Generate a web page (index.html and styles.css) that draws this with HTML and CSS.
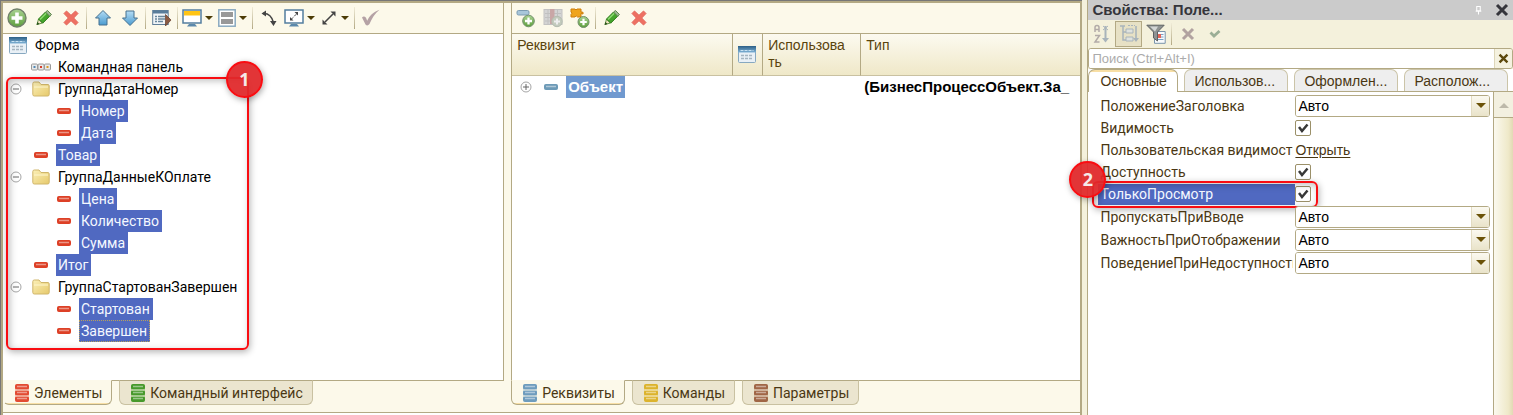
FILE: index.html
```html
<!DOCTYPE html>
<html lang="ru">
<head>
<meta charset="utf-8">
<title>Редактор формы</title>
<link rel="stylesheet" href="styles.css">
</head>
<body>
<svg class="defs" aria-hidden="true">
  <defs>
    <linearGradient id="g-green" x1="0" y1="0" x2="0" y2="1"><stop offset="0" stop-color="#a9d292"/><stop offset="1" stop-color="#5d9e3c"/></linearGradient>
    <linearGradient id="g-blue" x1="0" y1="0" x2="0" y2="1"><stop offset="0" stop-color="#b5ddf5"/><stop offset="1" stop-color="#4a9bd0"/></linearGradient>
    <linearGradient id="g-folder" x1="0" y1="0" x2="1" y2="1"><stop offset="0" stop-color="#fbf0b8"/><stop offset="1" stop-color="#e6c96b"/></linearGradient>
    <linearGradient id="g-head" x1="0" y1="0" x2="0" y2="1"><stop offset="0" stop-color="#2c5f86"/><stop offset="1" stop-color="#7fb2d6"/></linearGradient>
    <symbol id="i-add" viewBox="0 0 20 20"><circle cx="10" cy="10" r="9" fill="url(#g-green)" stroke="#71806b" stroke-width="1.4"/><path d="M10 4.500v11M4.500 10h11" stroke="#fff" stroke-width="3.600"/></symbol>
    <symbol id="i-pencil" viewBox="0 0 18 18"><path d="M2 15.500l1.500-5.500 4 4z" fill="#f3e4c3" stroke="#3d7a25" stroke-width=".8"/><path d="M1.500 16l1-3 2 2z" fill="#275016"/><path d="M3.500 10l7-7 4.200 4.200-7 7z" fill="#45a52c" stroke="#2d7a1b"/><path d="M5 10.500l6.200-6.200" stroke="#8ddb70" stroke-width="1.500"/><path d="M10.500 3l2-1.500 4 4-1.800 1.700z" fill="#9fb796" stroke="#5d8a4b"/></symbol>
    <symbol id="i-del" viewBox="0 0 18 18"><path d="M2 4.500L4.500 2 9 6.300 13.500 2 16 4.500 11.700 9l4.300 4.500-2.500 2.500L9 11.700 4.500 16 2 13.500 6.300 9z" fill="#ee7062" stroke="#e3685c"/></symbol>
    <symbol id="i-up" viewBox="0 0 18 18"><path d="M9 1.500l7.500 7.500h-3.500v7H5V9H1.500z" fill="url(#g-blue)" stroke="#47708f"/></symbol>
    <symbol id="i-down" viewBox="0 0 18 18"><path d="M9 16.500L1.500 9H5V2h8v7h3.500z" fill="url(#g-blue)" stroke="#47708f"/></symbol>
    <symbol id="i-form" viewBox="0 0 18 17"><rect x=".5" y=".5" width="17" height="16" rx="1" fill="#e9f0f6" stroke="#87a8c0"/><path d="M0 0h18v6.500H0z" fill="url(#g-head)"/><path d="M2.500 4.500h13" stroke="#c8e2f3" stroke-dasharray="3 1"/><path d="M3 9.500h3m1 0h3m1 0h3M3 12.500h3m1 0h3m1 0h3" stroke="#a5b4c0" stroke-width="1.500"/></symbol>
    <symbol id="i-formrun" viewBox="0 0 20 18"><rect x=".7" y="1.500" width="15.500" height="14" fill="#f0f4f7" stroke="#607e98"/><path d="M1 1.500h15v3H1z" fill="#587c9a"/><path d="M3 7.500h2m1 0h7M3 10h2m1 0h7M3 12.500h2m1 0h5" stroke="#69879d" stroke-width="1.300"/><path d="M13.500 5.500l5.500 5.500-5.500 6z" fill="#8b5a42" stroke="#643c2b" stroke-width=".7"/></symbol>
    <symbol id="i-monitor" viewBox="0 0 20 18"><rect x="1" y="1" width="18" height="13" fill="#fff" stroke="#537e9f" stroke-width="1.500"/><path d="M2 2h16v4.500H2z" fill="#ffc414"/><path d="M7 15h6l2 2.500H5z" fill="#5c89ab"/></symbol>
    <symbol id="i-split" viewBox="0 0 18 18"><rect x=".8" y=".8" width="16.400" height="16.400" fill="#fff" stroke="#89a9bf" stroke-width="1.500"/><path d="M3 3h12v5H3zM3 10h12v5H3z" fill="#989898"/></symbol>
    <symbol id="i-curve" viewBox="0 0 18 18"><path d="M3 4.500c6-.5 9 3.500 10.500 9" fill="none" stroke="#444" stroke-width="1.500"/><path d="M1.500 4.500L6 1.500v6zM13.500 17l-3.500-5h6.500z" fill="#444"/></symbol>
    <symbol id="i-mresize" viewBox="0 0 20 18"><rect x="1" y="1" width="18" height="13" fill="#fff" stroke="#537e9f" stroke-width="1.500"/><path d="M7 10.500l6-6" stroke="#444" stroke-dasharray="3 1.500"/><path d="M10.500 3H14v3.500zM6 8v3.500h3.500z" fill="#444"/><path d="M7 15h6l2 2.500H5z" fill="#5c89ab"/></symbol>
    <symbol id="i-diag" viewBox="0 0 18 18"><path d="M5 13l8-8" stroke="#444" stroke-width="1.600"/><path d="M10.500 2.500h5v5zM2.500 10.500v5h5z" fill="#444"/></symbol>
    <symbol id="i-check" viewBox="0 0 20 18"><path d="M1 8.500q2-2 4 .2l1.200 3C8.500 7 12 3 18.500.8 14 4.500 10.500 10 8.500 15q-2 2.500-4 .5z" fill="#b5a2a5"/></symbol>
    <symbol id="i-cmdbar" viewBox="0 0 20 8"><g fill="#e9e9e9" stroke="#9a9a9a"><rect x=".5" y="1" width="6" height="6" rx="1"/><rect x="7" y="1" width="6" height="6" rx="1"/><rect x="13.500" y="1" width="6" height="6" rx="1"/></g><path d="M2.500 3h2v2h-2z" fill="#4f88b5"/><path d="M9 3h2v2H9z" fill="#d63e2d"/><path d="M15.500 3h2v2h-2z" fill="#d69a28"/></symbol>
    <symbol id="i-folder" viewBox="0 0 18 16"><path d="M.8 2.500q0-1.500 1.500-1.500H7l2 2.500h7q1.200 0 1.200 1.500v8.500q0 1.500-1.500 1.500H2.300Q.8 15 .8 13.500z" fill="url(#g-folder)" stroke="#d0b66b"/><path d="M2 6h14" stroke="#fff7cf"/></symbol>
    <symbol id="i-minus" viewBox="0 0 12 12"><circle cx="6" cy="6" r="5" fill="#fff" stroke="#a6a6a6"/><path d="M3 6h6" stroke="#666"/></symbol>
    <symbol id="i-plus" viewBox="0 0 12 12"><circle cx="6" cy="6" r="5" fill="#fff" stroke="#a6a6a6"/><path d="M3 6h6M6 3v6" stroke="#666"/></symbol>
    <symbol id="i-bar" viewBox="0 0 14 6"><rect x=".5" y=".5" width="13" height="5" rx="1" fill="currentColor" stroke="currentColor"/><path d="M2 2.500h10" stroke="#fff" stroke-opacity=".45" stroke-width="1.500"/></symbol>
    <symbol id="i-stack" viewBox="0 0 14 18"><use href="#i-bar" width="14" height="6"/><use href="#i-bar" y="6" width="14" height="6"/><use href="#i-bar" y="12" width="14" height="6"/><path d="M1 6h12M1 12h12" stroke="#fcf9ea"/></symbol>
    <symbol id="i-addattr" viewBox="0 0 20 20"><rect x="1" y="2.500" width="12" height="4.500" rx="1.500" fill="#a8c6da" stroke="#7b9bb1"/><circle cx="12.500" cy="13" r="5.800" fill="url(#g-green)" stroke="#71906b"/><path d="M12.500 9.500v7M9 13h7" stroke="#fff" stroke-width="2.300"/></symbol>
    <symbol id="i-addcol" viewBox="0 0 20 20"><rect x="1" y="1.500" width="18" height="15" fill="#d4d4d4" stroke="#c2c2c2"/><path d="M2 5.500h16M2 9.500h16M2 13h16M5 2v14M14.500 2v14" stroke="#c0c0c0"/><path d="M7 1h4.500v15H7z" fill="#c9a6a6"/><circle cx="14" cy="13.500" r="5.200" fill="#c3cbbd" stroke="#b5bcb0"/><path d="M14 10.500v6M11 13.500h6" stroke="#eee" stroke-width="2"/></symbol>
    <symbol id="i-addext" viewBox="0 0 20 20"><path d="M1 1h4q1 2 2 0h4v3q3-.5 2 2l-2-.5V9H7.500Q6 6.500 5 9H1V6.500Q3 5 1 4z" fill="#efa41c" stroke="#cd7f0c"/><circle cx="13.500" cy="14" r="5.500" fill="url(#g-green)" stroke="#71906b"/><path d="M13.500 10.700v6.600M10.200 14h6.600" stroke="#fff" stroke-width="2.200"/></symbol>
    <symbol id="i-sort" viewBox="0 0 18 20"><path d="M2 8V3.500Q2 1.500 4 1.500t2 2V8M2 5.500h4M2 11.500h4.500L2 18h4.500" fill="none" stroke="#b2aba8" stroke-width="1.500"/><path d="M12.500 2v13" stroke="#a9b4bb" stroke-width="2"/><path d="M9 14h7l-3.500 4.500z" fill="#a9b4bb"/><path d="M10 2l5 4M15 2l-5 4" stroke="#a9b4bb"/></symbol>
    <symbol id="i-tree" viewBox="0 0 20 20"><path d="M1 2h5M4 2v14h4M4 8h4" fill="none" stroke="#a9b4bb" stroke-width="1.500"/><path d="M7 5h7v4H7zM7 13h7v4H7z" fill="#dfe2de" stroke="#a9b4bb"/><path d="M9 1.500h7" stroke="#a9b4bb" stroke-dasharray="2 1"/><path d="M17 2v13" stroke="#a9b4bb" stroke-width="1.600"/><path d="M14 14h6l-3 4z" fill="#a9b4bb"/></symbol>
    <symbol id="i-filter" viewBox="0 0 20 20"><path d="M8.500 7.500h10.700v11.800H8.500z" fill="#f8fafc" stroke="#7a94ab"/><path d="M10.500 10.500h7M10.500 13h7M10.500 15.500h7" stroke="#7aa0c4"/><path d="M12 10h3v4h-3z" fill="#e36356"/><path d="M.8 1.200h17.400L11.500 8v9l-4-3V8z" fill="#8f9393" stroke="#5e6262"/><path d="M4 2.500h8L9 7.500z" fill="#d3d6d6"/></symbol>
    <symbol id="i-x" viewBox="0 0 14 14"><path d="M2 2l10 10M12 2L2 12" stroke="currentColor" stroke-width="3"/></symbol>
    <symbol id="i-tick" viewBox="0 0 12 10"><path d="M1.500 3.500l3.500 3.500 5.500-5" fill="none" stroke="#9bae96" stroke-width="2.800"/></symbol>
    <symbol id="i-pin" viewBox="0 0 8 10"><path d="M2 1h4v5H2zM.8 6.300h6.400M4 6.500V10" fill="none" stroke="#fff" stroke-width="1.200"/></symbol>
    <symbol id="i-caret" viewBox="0 0 10 6"><path d="M0 0h10L5 5z" fill="currentColor"/></symbol>
  </defs>
</svg>

<main class="app">
  <section class="editor">
    <div class="panes">
      <section class="pane pane-elements">
        <div class="view">
          <div class="toolbar">
            <button class="tool" aria-label="Добавить"><svg class="ic20"><use href="#i-add"/></svg></button>
            <button class="tool" aria-label="Изменить"><svg class="ic18"><use href="#i-pencil"/></svg></button>
            <button class="tool" aria-label="Удалить"><svg class="ic18"><use href="#i-del"/></svg></button>
            <span class="sep"></span>
            <button class="tool" aria-label="Вверх"><svg class="ic18"><use href="#i-up"/></svg></button>
            <button class="tool" aria-label="Вниз"><svg class="ic18"><use href="#i-down"/></svg></button>
            <span class="sep"></span>
            <button class="tool" aria-label="Проверить форму"><svg class="ic20"><use href="#i-formrun"/></svg></button>
            <span class="sep"></span>
            <button class="tool drop" aria-label="Экран"><svg class="ic20"><use href="#i-monitor"/></svg><svg class="mini"><use href="#i-caret"/></svg></button>
            <button class="tool drop" aria-label="Группировка"><svg class="ic18"><use href="#i-split"/></svg><svg class="mini"><use href="#i-caret"/></svg></button>
            <span class="sep"></span>
            <button class="tool" aria-label="Повернуть"><svg class="ic18"><use href="#i-curve"/></svg></button>
            <button class="tool drop" aria-label="Разрешение"><svg class="ic20"><use href="#i-mresize"/></svg><svg class="mini"><use href="#i-caret"/></svg></button>
            <button class="tool drop" aria-label="Масштаб"><svg class="ic18"><use href="#i-diag"/></svg><svg class="mini"><use href="#i-caret"/></svg></button>
            <span class="sep"></span>
            <button class="tool" aria-label="Проверить"><svg class="ic20"><use href="#i-check"/></svg></button>
          </div>
          <div class="tree-area">
            <ul class="tree">
              <li class="node root"><svg class="form"><use href="#i-form"/></svg><span class="label">Форма</span></li>
              <li class="node bar"><svg class="cmd"><use href="#i-cmdbar"/></svg><span class="label">Командная панель</span></li>
              <li class="node group"><svg class="exp"><use href="#i-minus"/></svg><svg class="folder"><use href="#i-folder"/></svg><span class="label">ГруппаДатаНомер</span></li>
              <li class="node child"><svg class="dash"><use href="#i-bar"/></svg><span class="label sel">Номер</span></li>
              <li class="node child"><svg class="dash"><use href="#i-bar"/></svg><span class="label sel">Дата</span></li>
              <li class="node item"><svg class="dash"><use href="#i-bar"/></svg><span class="label sel">Товар</span></li>
              <li class="node group"><svg class="exp"><use href="#i-minus"/></svg><svg class="folder"><use href="#i-folder"/></svg><span class="label">ГруппаДанныеКОплате</span></li>
              <li class="node child"><svg class="dash"><use href="#i-bar"/></svg><span class="label sel">Цена</span></li>
              <li class="node child"><svg class="dash"><use href="#i-bar"/></svg><span class="label sel">Количество</span></li>
              <li class="node child"><svg class="dash"><use href="#i-bar"/></svg><span class="label sel">Сумма</span></li>
              <li class="node item"><svg class="dash"><use href="#i-bar"/></svg><span class="label sel">Итог</span></li>
              <li class="node group"><svg class="exp"><use href="#i-minus"/></svg><svg class="folder"><use href="#i-folder"/></svg><span class="label">ГруппаСтартованЗавершен</span></li>
              <li class="node child"><svg class="dash"><use href="#i-bar"/></svg><span class="label sel">Стартован</span></li>
              <li class="node child"><svg class="dash"><use href="#i-bar"/></svg><span class="label sel focus">Завершен</span></li>
            </ul>
            <div class="callout callout-tree"><span class="badge">1</span></div>
          </div>
        </div>
        <nav class="tabs">
          <button class="tab active"><svg class="stack red"><use href="#i-stack"/></svg>Элементы</button>
          <button class="tab"><svg class="stack green"><use href="#i-stack"/></svg>Командный интерфейс</button>
        </nav>
      </section>

      <section class="pane pane-attrs">
        <div class="view">
          <div class="toolbar">
            <button class="tool" aria-label="Добавить реквизит"><svg class="ic20"><use href="#i-addattr"/></svg></button>
            <button class="tool" aria-label="Добавить колонку"><svg class="ic20"><use href="#i-addcol"/></svg></button>
            <button class="tool" aria-label="Добавить расширение"><svg class="ic20"><use href="#i-addext"/></svg></button>
            <span class="sep"></span>
            <button class="tool" aria-label="Изменить"><svg class="ic18"><use href="#i-pencil"/></svg></button>
            <button class="tool" aria-label="Удалить"><svg class="ic18"><use href="#i-del"/></svg></button>
          </div>
          <table class="attrs">
            <colgroup><col class="c-name"><col class="c-form"><col class="c-use"><col class="c-type"></colgroup>
            <thead><tr><th>Реквизит</th><th class="mid"><svg class="form"><use href="#i-form"/></svg></th><th>Использова<wbr>ть</th><th>Тип</th></tr></thead>
            <tbody><tr><td><div class="cell"><svg class="exp"><use href="#i-plus"/></svg><svg class="dash blue"><use href="#i-bar"/></svg><span class="object">Объект</span></div></td><td></td><td></td><td>(БизнесПроцессОбъект.За_</td></tr></tbody>
          </table>
        </div>
        <nav class="tabs">
          <button class="tab active"><svg class="stack blue"><use href="#i-stack"/></svg>Реквизиты</button>
          <button class="tab"><svg class="stack yellow"><use href="#i-stack"/></svg>Команды</button>
          <button class="tab"><svg class="stack brown"><use href="#i-stack"/></svg>Параметры</button>
        </nav>
      </section>
    </div>
    <div class="below"></div>
  </section>

  <aside class="props">
    <header class="title"><h1>Свойства: Поле...</h1><button class="plain" aria-label="Закрепить"><svg class="pin"><use href="#i-pin"/></svg></button><button class="plain" aria-label="Закрыть"><svg class="close"><use href="#i-x"/></svg></button></header>
    <div class="toolbar ptools">
      <button class="tool" aria-label="По алфавиту"><svg class="ic20"><use href="#i-sort"/></svg></button>
      <button class="tool pressed" aria-label="По категориям"><svg class="ic20"><use href="#i-tree"/></svg></button>
      <button class="tool" aria-label="Отбор"><svg class="ic20"><use href="#i-filter"/></svg></button>
      <span class="sep"></span>
      <button class="tool muted" aria-label="Отменить"><svg class="ic14"><use href="#i-x"/></svg></button>
      <button class="tool" aria-label="Применить"><svg class="tick"><use href="#i-tick"/></svg></button>
    </div>
    <div class="search"><input type="text" aria-label="Поиск" placeholder="Поиск (Ctrl+Alt+I)"><button class="clear" aria-label="Очистить"><svg><use href="#i-x"/></svg></button></div>
    <nav class="ptabs"><button class="ptab active">Основные</button><button class="ptab">Использов...</button><button class="ptab">Оформлен...</button><button class="ptab">Располож...</button></nav>
    <div class="pbody">
      <div class="plist">
        <div class="prop"><label for="p1">ПоложениеЗаголовка</label><div class="combo"><select id="p1"><option>Авто</option></select><span class="arrow"><svg><use href="#i-caret"/></svg></span></div></div>
        <div class="prop flat"><label for="p2">Видимость</label><input id="p2" type="checkbox" checked></div>
        <div class="prop flat"><span class="name">Пользовательская видимость</span><a href="#">Открыть</a></div>
        <div class="prop flat"><label for="p3">Доступность</label><input id="p3" type="checkbox" checked></div>
        <div class="prop flat chosen"><label for="p4">ТолькоПросмотр</label><input id="p4" type="checkbox" checked><div class="callout callout-prop"><span class="badge">2</span></div></div>
        <div class="prop"><label for="p5">ПропускатьПриВводе</label><div class="combo"><select id="p5"><option>Авто</option></select><span class="arrow"><svg><use href="#i-caret"/></svg></span></div></div>
        <div class="prop"><label for="p6">ВажностьПриОтображении</label><div class="combo"><select id="p6"><option>Авто</option></select><span class="arrow"><svg><use href="#i-caret"/></svg></span></div></div>
        <div class="prop"><label for="p7">ПоведениеПриНедоступности</label><div class="combo"><select id="p7"><option>Авто</option></select><span class="arrow"><svg><use href="#i-caret"/></svg></span></div></div>
      </div>
      <div class="scroll"><button aria-label="Прокрутить вверх"><svg><use href="#i-caret"/></svg></button></div>
    </div>
  </aside>
</main>
</body>
</html>
```
FILE: styles.css
```css
* { box-sizing: border-box; }
body { margin: 0; font: 14px/18px Roboto, "Liberation Sans", sans-serif; color: #000; background: #fff; }
button, input, select { font: inherit; color: inherit; margin: 0; padding: 0; }
button { border: 0; background: none; }
svg { display: block; flex: none; }
.defs { position: absolute; width: 0; height: 0; }

.app { display: flex; min-height: 100vh; background: #f4f1dc; }
.app::before { content: ""; width: 1px; background: #777; }
.editor { flex: 1081 1 0; min-width: 0; display: flex; flex-direction: column; margin-top: 1px; border: solid #b3a984; border-width: 2px 2px 0; background: #fcf9ea; box-shadow: 0 -1px #777; }
.panes { flex: 1; display: flex; gap: 7px; padding-bottom: 7px; }
.pane { min-width: 0; display: flex; flex-direction: column; }
.pane-elements { flex: 501 1 0; }
.pane-attrs { flex: 569 1 0; }
.view { flex: 1; display: flex; flex-direction: column; border-right: 1px solid #b3a984; border-bottom: 1px solid #b3a984; }
.pane-attrs .view { border-left: 1px solid #b3a984; border-right: 0; background: #fff; }
.below { height: 3px; border-top: 1px solid #b3a984; background: #fff; }

.toolbar { display: flex; align-items: center; height: 31px; border-bottom: 1px solid #b3a984; background: #fcf9ea; }
.tool { width: 27px; height: 26px; display: flex; align-items: center; justify-content: center; }
.drop { width: 35px; gap: 3px; color: #4c3c06; }
.mini { width: 8px; height: 5px; }
.sep { width: 1px; height: 22px; margin: 0 2px; background: linear-gradient(#f0ecd8, #b3a984); }
.ic20 { width: 20px; height: 20px; }
.ic18 { width: 18px; height: 18px; }
.ic14 { width: 14px; height: 14px; }

.tree-area { position: relative; flex: 1; background: #fff; }
.tree { list-style: none; margin: 0; padding: 0; }
.node { display: flex; align-items: center; height: 22px; }
.label { line-height: 22px; padding: 0 3px 0 2px; white-space: nowrap; }
.root { padding-left: 6px; }
.root .label { margin-left: 6px; }
.form { width: 18px; height: 17px; }
.bar { padding-left: 28px; }
.cmd { width: 20px; height: 8px; margin-right: 5px; }
.group { padding-left: 7px; }
.exp { width: 12px; height: 12px; }
.folder { width: 18px; height: 16px; margin: 0 6px 0 10px; }
.item { padding-left: 31px; }
.child { padding-left: 54px; }
.dash { width: 14px; height: 6px; margin-right: 8px; color: #dd4026; }
.sel { color: #f4f8ff; background: #5069c1; }
.focus { outline: 1px dotted #b9a15a; outline-offset: -1px; }

.callout { position: absolute; border: 2px solid #f90d12; border-radius: 6px; box-shadow: 1px 2px 7px rgba(0,0,0,.3), inset 2px 2px 7px rgba(0,0,0,.25); pointer-events: none; }
.callout-tree { left: 3px; top: 43px; width: 243px; height: 273px; }
.badge { position: absolute; width: 37px; height: 37px; border: 2px solid #f90d12; border-radius: 50%; background: rgba(224,40,43,.94); color: #f5e9e9; font: bold 18px/33px "Open Sans", sans-serif; text-align: center; box-shadow: 1px 2px 6px rgba(0,0,0,.35); }
.callout-tree .badge { right: -16px; top: -18px; }

.tabs { position: relative; display: flex; gap: 7px; height: 25px; margin-top: -1px; }
.tab { display: flex; align-items: center; gap: 5px; padding: 0 9px 0 11px; color: #4a3713; border: 1px solid #c9c1a1; border-top-color: #b3a984; border-radius: 0 0 6px 6px; background: #ebe5cf; white-space: nowrap; }
.tab.active { border-color: #b3a984; border-top-color: #fcf9ea; background: linear-gradient(#fcf9ea 22px, #f8dfa5 22px); }
.pane-elements .tab.active { border-left-color: #fcf9ea; }
.stack { width: 14px; height: 18px; }
.red { color: #e24b32; }
.green { color: #47992b; }
.blue { color: #6e9cbd; }
.yellow { color: #dcb32d; }
.brown { color: #a06646; }

.attrs { width: 100%; table-layout: fixed; border-collapse: separate; border-spacing: 0; font-family: "Liberation Sans", sans-serif; }
.c-name { width: 221px; }
.c-form { width: 30px; }
.c-use { width: 98px; }
.attrs th { height: 42px; padding: 3px 5px; vertical-align: top; text-align: left; font-weight: normal; line-height: 17px; color: #59430d; border-right: 1px solid #b3a984; border-bottom: 1px solid #c9c1a1; background: linear-gradient(#fcfaf0, #efe8c8); }
.attrs th:last-child { border-right: 0; }
.attrs .mid { padding: 0 5px; vertical-align: middle; }
.attrs td { height: 22px; padding: 0 3px; font-size: 15px; font-weight: bold; white-space: nowrap; }
.cell { display: flex; align-items: center; padding-left: 5px; }
.cell .dash { margin: 0 8px 0 12px; color: #6d9ab7; }
.object { padding: 0 2px; line-height: 22px; color: #fff; background: #7099cf; }

.props { flex: 426 1 0; min-width: 0; margin-left: 5px; display: flex; flex-direction: column; border-left: 1px solid #b3a984; font-family: "Liberation Sans", sans-serif; }
.title { display: flex; align-items: center; gap: 13px; height: 20px; padding: 0 4px; background: #cbcbcb; color: #35353b; }
.title h1 { flex: 1; margin: 0; font: bold 15px/18px "Liberation Sans", sans-serif; }
.pin { width: 7px; height: 10px; }
.close { width: 14px; height: 14px; }
.ptools { height: 28px; border: 0; background: #f4f1dc; }
.pressed { border: 1px solid #b3a984; background: #e7e1c5; }
.muted { color: #b1a2a0; }
.tick { width: 12px; height: 10px; }
.search { display: flex; height: 21px; border: 1px solid #b3a984; border-radius: 3px; background: #fff; overflow: hidden; }
.search input { flex: 1; min-width: 0; padding: 0 3px; border: 0; outline: 0; background: #fff; font-size: 13px; }
.search input::placeholder { color: #ababab; opacity: 1; }
.clear { width: 18px; display: flex; align-items: center; justify-content: center; color: #5c480b; border-left: 1px solid #ddd6b9; background: #f5f2e0; }
.clear svg { width: 11px; height: 11px; }
.ptabs { display: flex; gap: 6px; height: 23px; border-bottom: 1px solid #b3a984; background: #fff; }
.ptab { flex: 0 1 104px; min-width: 0; padding: 0 9px; text-align: left; color: #4a3713; border: 1px solid #cbc4a8; border-bottom: 0; border-radius: 7px 7px 0 0; background: #eee; white-space: nowrap; }
.ptab.active { flex-basis: 90px; margin-bottom: -1px; padding: 0 11px; border-color: #b3a984; background: linear-gradient(#f8dfa5 2px, #fff 2px); }
.pbody { flex: 1; display: flex; background: #fff; }
.plist { flex: 1; min-width: 0; padding: 2px 3px 0 10px; }
.prop { position: relative; display: flex; align-items: center; height: 23px; color: #4a3713; }
.flat { height: 22px; }
.prop label, .name { flex: 0 1 197px; min-width: 0; padding-left: 2px; border-right: 2px solid transparent; font-family: Roboto, sans-serif; white-space: nowrap; overflow: hidden; }
.prop a { color: inherit; text-underline-offset: 2px; }
.combo { flex: 1 1 192px; display: grid; height: 22px; border: 1px solid #b3a984; border-radius: 3px; overflow: hidden; }
.combo select { grid-area: 1 / 1; appearance: none; border: 0; outline: 0; padding-left: 2px; background: #fff; color: #000; }
.arrow { grid-area: 1 / 1; justify-self: end; width: 18px; display: flex; align-items: center; justify-content: center; color: #6b5208; border-left: 1px solid #e3dcc2; background: linear-gradient(#fbf9f0, #e9e3c9); pointer-events: none; }
.arrow svg { width: 10px; height: 6px; }
input[type="checkbox"] { appearance: none; width: 16px; height: 16px; border: 1px solid #9b9069; border-radius: 2px; background: #fff; }
input[type="checkbox"]:checked { background: #fff url("data:image/svg+xml,%3Csvg xmlns='http://www.w3.org/2000/svg' viewBox='0 0 14 14'%3E%3Cpath d='M3 6l3 4 5.500-6.500' fill='none' stroke='%23383838' stroke-width='2.500'/%3E%3C/svg%3E"); }
.chosen label { color: #f4f8ff; background: #5069c1; line-height: 21px; }
.callout-prop { left: -6px; top: -2px; width: 226px; height: 27px; }
.callout-prop .badge { left: -25px; top: -22px; }
.scroll { width: 20px; border-left: 1px solid #b3a984; background: linear-gradient(90deg, #fbf9ef, #efe9c9 75%, #e2d9b4); }
.scroll button { display: flex; align-items: center; justify-content: center; width: 100%; height: 26px; border-bottom: 1px solid #b3a984; background: #f3f0e0; color: #bdb9aa; }
.scroll svg { width: 10px; height: 8px; transform: rotate(180deg); }
```
